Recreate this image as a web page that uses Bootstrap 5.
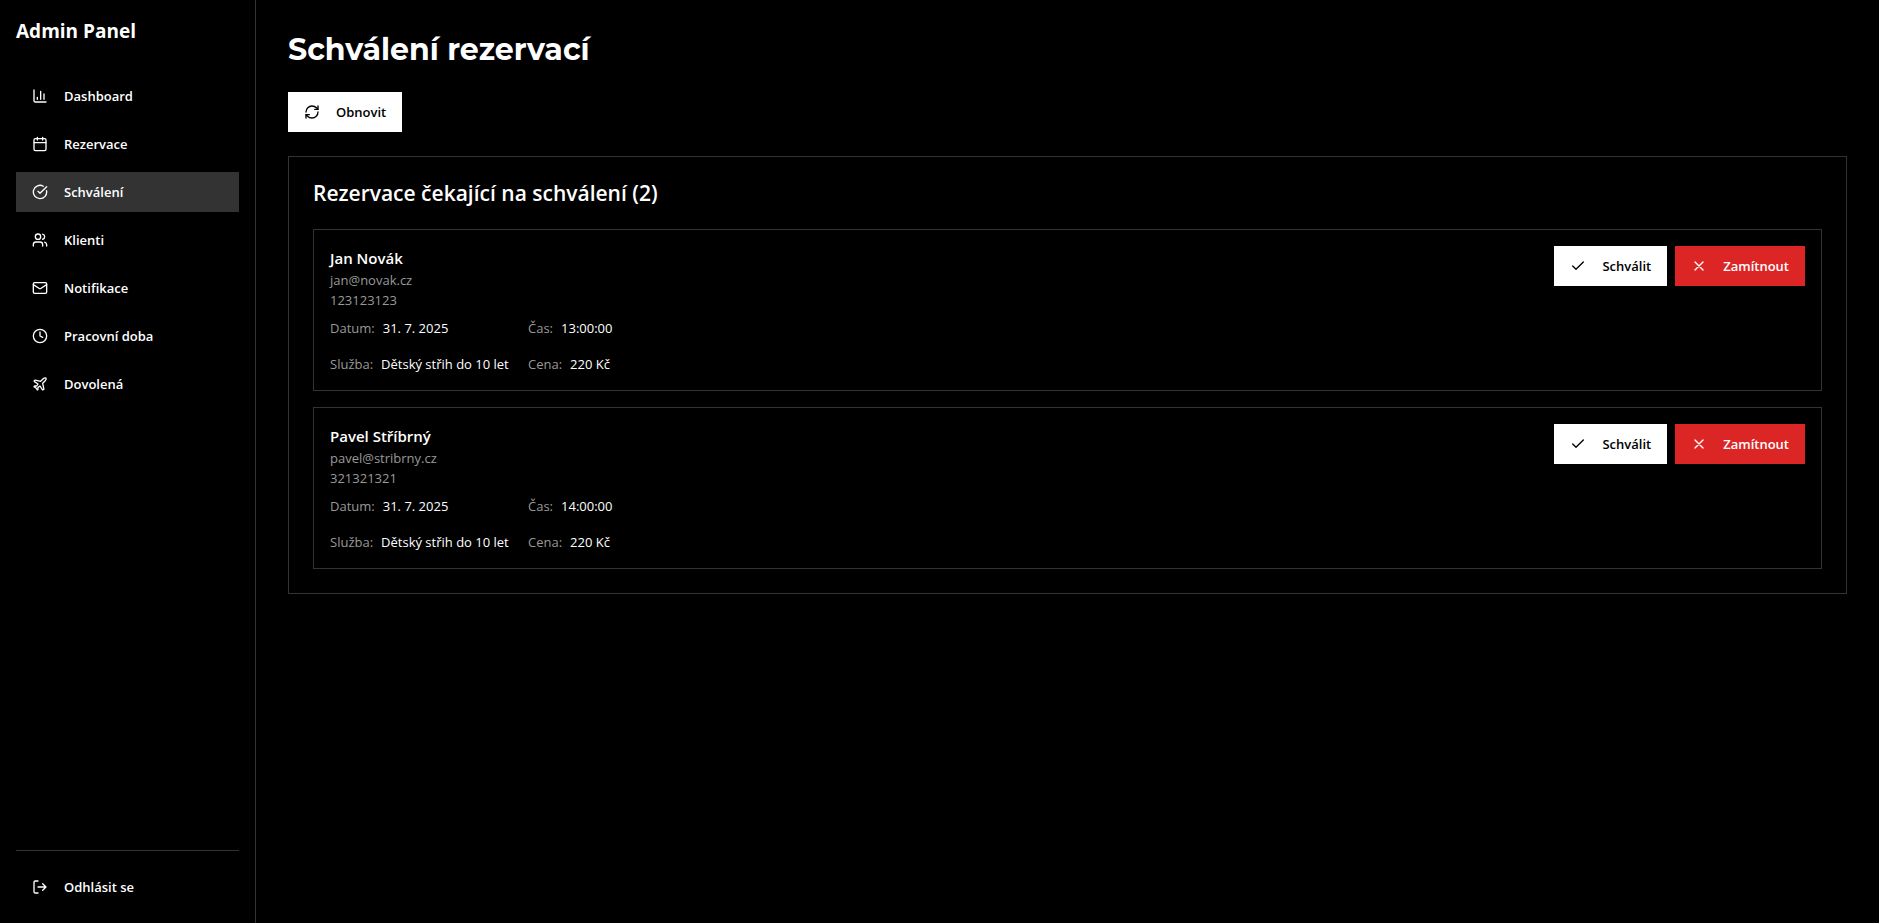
<!DOCTYPE html>
<html lang="cs" data-bs-theme="dark">
<head>
<meta charset="utf-8">
<meta name="viewport" content="width=device-width, initial-scale=1">
<title>Admin Panel – Schválení rezervací</title>
<link href="https://cdn.jsdelivr.net/npm/bootstrap@5.3.0/dist/css/bootstrap.min.css" rel="stylesheet">
<style>
  :root { --line: #333; --muted: #999; --danger: #dc2626; }
  body { background: #000; color: #fff; font-family: "Segoe UI", "Open Sans", sans-serif; font-size: 13px; line-height: 20px; }
  .sidebar { background: #000; border-bottom: 1px solid var(--line); }
  @media (min-width: 768px) {
    .sidebar { width: 256px; height: 100vh; border-bottom: 0; border-right: 1px solid var(--line); }
  }
  .brand { font-size: 19px; line-height: 30px; font-weight: 700; }
  .panel-btn {
    --bs-btn-border-radius: 0; --bs-btn-border-width: 0; --bs-btn-color: #fff; --bs-btn-hover-color: #fff;
    --bs-btn-hover-bg: #222; --bs-btn-font-size: 13px; --bs-btn-font-weight: 600; --bs-btn-line-height: 20px;
    --bs-btn-padding-y: 10px; --bs-btn-padding-x: 16px;
    display: flex; align-items: center; gap: 16px; height: 40px; white-space: nowrap;
  }
  .panel-btn.active { --bs-btn-active-bg: var(--line); --bs-btn-active-color: #fff; }
  .panel-btn svg { width: 16px; height: 16px; flex: none; fill: none; stroke: currentColor; stroke-width: 2; stroke-linecap: round; stroke-linejoin: round; }
  .panel-btn-light { --bs-btn-bg: #fff; --bs-btn-color: #000; --bs-btn-hover-bg: #e5e5e5; --bs-btn-hover-color: #000; }
  .panel-btn-danger { --bs-btn-bg: var(--danger); --bs-btn-hover-bg: #b91c1c; }
  .sidebar-foot { border-top: 1px solid var(--line); }
  .menu { margin-top: 30px; }
  .content { padding: 32px; min-width: 0; }
  .page-title { font-family: Montserrat, Inter, sans-serif; font-size: 30px; line-height: 36px; font-weight: 700; }
  .panel { border: 1px solid var(--line); padding: 24px; }
  .panel-title { font-size: 21px; line-height: 24px; font-weight: 600; }
  .booking { border: 1px solid var(--line); }
  .booking-name { font-size: 15px; line-height: 24px; font-weight: 600; }
  .soft { color: var(--muted); }
  .facts { display: grid; grid-template-columns: repeat(2, minmax(182px, auto)); gap: 16px; }
</style>
</head>
<body>
<svg class="d-none" aria-hidden="true">
  <symbol id="i-chart" viewBox="0 0 24 24"><path d="M3 3v16a2 2 0 0 0 2 2h16M18 17V9M13 17V5M8 17v-3"/></symbol>
  <symbol id="i-calendar" viewBox="0 0 24 24"><path d="M8 2v4M16 2v4M3 10h18"/><rect x="3" y="4" width="18" height="18" rx="2"/></symbol>
  <symbol id="i-approve" viewBox="0 0 24 24"><path d="M21.801 10A10 10 0 1 1 17 3.335"/><path d="m9 11 3 3L22 4"/></symbol>
  <symbol id="i-users" viewBox="0 0 24 24"><path d="M16 21v-2a4 4 0 0 0-4-4H6a4 4 0 0 0-4 4v2"/><circle cx="9" cy="7" r="4"/><path d="M22 21v-2a4 4 0 0 0-3-3.87M16 3.13a4 4 0 0 1 0 7.75"/></symbol>
  <symbol id="i-mail" viewBox="0 0 24 24"><rect x="2" y="4" width="20" height="16" rx="2"/><path d="m22 7-8.97 5.7a1.94 1.94 0 0 1-2.06 0L2 7"/></symbol>
  <symbol id="i-clock" viewBox="0 0 24 24"><circle cx="12" cy="12" r="10"/><path d="M12 6v6l4 2"/></symbol>
  <symbol id="i-plane" viewBox="0 0 24 24"><path d="M17.8 19.2 16 11l3.5-3.5C21 6 21.5 4 21 3c-1-.5-3 0-4.5 1.5L13 8 4.8 6.2c-.5-.1-.9.1-1.1.5l-.3.5c-.2.5-.1 1 .3 1.3L9 12l-2 3H4l-1 1 3 2 2 3 1-1v-3l3-2 3.5 5.3c.3.4.8.5 1.3.3l.5-.2c.4-.3.6-.7.5-1.2z"/></symbol>
  <symbol id="i-logout" viewBox="0 0 24 24"><path d="M9 21H5a2 2 0 0 1-2-2V5a2 2 0 0 1 2-2h4M16 17l5-5-5-5M21 12H9"/></symbol>
  <symbol id="i-refresh" viewBox="0 0 24 24"><path d="M3 12a9 9 0 0 1 9-9 9.75 9.75 0 0 1 6.74 2.74L21 8"/><path d="M21 3v5h-5M21 12a9 9 0 0 1-9 9 9.75 9.75 0 0 1-6.74-2.74L3 16"/><path d="M8 16H3v5"/></symbol>
  <symbol id="i-check" viewBox="0 0 24 24"><path d="M20 6 9 17l-5-5"/></symbol>
  <symbol id="i-x" viewBox="0 0 24 24"><path d="M18 6 6 18M6 6l12 12"/></symbol>
</svg>

<div class="d-md-flex min-vh-100">
  <aside class="sidebar d-flex flex-column flex-shrink-0 p-3 sticky-top">
    <div class="brand">Admin Panel</div>
    <nav class="menu d-flex flex-column gap-2 mb-auto" aria-label="Hlavní navigace">
      <a class="btn panel-btn" href="#dashboard"><svg><use href="#i-chart"/></svg>Dashboard</a>
      <a class="btn panel-btn" href="#rezervace"><svg><use href="#i-calendar"/></svg>Rezervace</a>
      <a class="btn panel-btn active" href="#schvaleni" aria-current="page"><svg><use href="#i-approve"/></svg>Schválení</a>
      <a class="btn panel-btn" href="#klienti"><svg><use href="#i-users"/></svg>Klienti</a>
      <a class="btn panel-btn" href="#notifikace"><svg><use href="#i-mail"/></svg>Notifikace</a>
      <a class="btn panel-btn" href="#pracovni-doba"><svg><use href="#i-clock"/></svg>Pracovní doba</a>
      <a class="btn panel-btn" href="#dovolena"><svg><use href="#i-plane"/></svg>Dovolená</a>
    </nav>
    <div class="sidebar-foot pt-3">
      <button type="button" class="btn panel-btn w-100"><svg><use href="#i-logout"/></svg>Odhlásit se</button>
    </div>
  </aside>

  <main class="content flex-grow-1">
    <h1 class="page-title mb-4">Schválení rezervací</h1>
    <button type="button" class="btn panel-btn panel-btn-light mb-4"><svg><use href="#i-refresh"/></svg>Obnovit</button>

    <section class="panel">
      <h2 class="panel-title mb-4">Rezervace čekající na schválení (2)</h2>
      <div class="d-flex flex-column gap-3">
        <article class="booking d-flex flex-wrap justify-content-between align-items-start gap-3 p-3">
          <div>
            <h3 class="booking-name mb-0">Jan Novák</h3>
            <div class="soft">jan@novak.cz</div>
            <div class="soft">123123123</div>
            <div class="facts mt-2">
              <div class="d-flex gap-2"><span class="soft">Datum:</span><span>31. 7. 2025</span></div>
              <div class="d-flex gap-2"><span class="soft">Čas:</span><span>13:00:00</span></div>
              <div class="d-flex gap-2"><span class="soft">Služba:</span><span>Dětský střih do 10 let</span></div>
              <div class="d-flex gap-2"><span class="soft">Cena:</span><span>220 Kč</span></div>
            </div>
          </div>
          <div class="d-flex gap-2">
            <button type="button" class="btn panel-btn panel-btn-light"><svg><use href="#i-check"/></svg>Schválit</button>
            <button type="button" class="btn panel-btn panel-btn-danger"><svg><use href="#i-x"/></svg>Zamítnout</button>
          </div>
        </article>
        <article class="booking d-flex flex-wrap justify-content-between align-items-start gap-3 p-3">
          <div>
            <h3 class="booking-name mb-0">Pavel Stříbrný</h3>
            <div class="soft">pavel@stribrny.cz</div>
            <div class="soft">321321321</div>
            <div class="facts mt-2">
              <div class="d-flex gap-2"><span class="soft">Datum:</span><span>31. 7. 2025</span></div>
              <div class="d-flex gap-2"><span class="soft">Čas:</span><span>14:00:00</span></div>
              <div class="d-flex gap-2"><span class="soft">Služba:</span><span>Dětský střih do 10 let</span></div>
              <div class="d-flex gap-2"><span class="soft">Cena:</span><span>220 Kč</span></div>
            </div>
          </div>
          <div class="d-flex gap-2">
            <button type="button" class="btn panel-btn panel-btn-light"><svg><use href="#i-check"/></svg>Schválit</button>
            <button type="button" class="btn panel-btn panel-btn-danger"><svg><use href="#i-x"/></svg>Zamítnout</button>
          </div>
        </article>
      </div>
    </section>
  </main>
</div>
<script src="https://cdn.jsdelivr.net/npm/bootstrap@5.3.0/dist/js/bootstrap.bundle.min.js"></script>
</body>
</html>
